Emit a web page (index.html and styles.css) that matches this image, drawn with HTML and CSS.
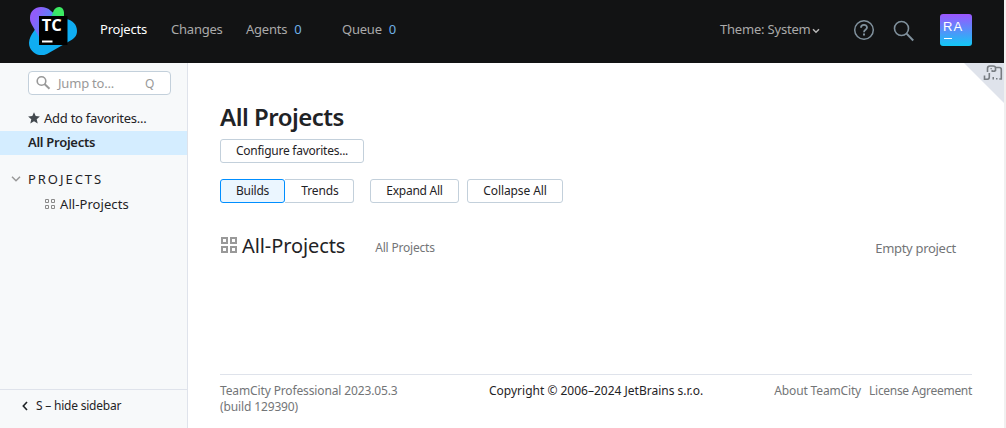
FILE: index.html
```
<!DOCTYPE html>
<html lang="en">
<head>
<meta charset="utf-8">
<title>All Projects — TeamCity</title>
<link rel="stylesheet" href="styles.css">
</head>
<body>
<div class="app">
  <header class="header">
    <svg class="logo" width="50" height="50" viewBox="0 0 50 50">
      <defs>
        <linearGradient id="violet" x1="0" y1="0.3" x2="1" y2="0.7"><stop offset="0.1" stop-color="#905cfb"/><stop offset="0.6" stop-color="#4a8df8"/><stop offset="1" stop-color="#18a3f3"/></linearGradient>
        <linearGradient id="green" x1="1" y1="0" x2="0" y2="1"><stop offset="0.5" stop-color="#3bea62"/><stop offset="1" stop-color="#20b8c0"/></linearGradient>
      </defs>
      <path d="M39 14C46 15 50 20 50 26C50 31 47 34 41 37L20 49C12 53 2 47 2 38C2 34 4 30 7 26L14 14z" fill="#0fadf2"/>
      <path d="M3 13C3 6 8 2 14 2C18 2 21 3 24 6L41 21L31 32L12 32L5 20C3.500 17 3 16 3 13z" fill="url(#violet)"/>
      <path d="M23 14L27 5C30 0 37 1 37 8V15z" fill="url(#green)"/>
      <path d="M12 11h28.500v29H12z" fill="#000"/>
      <path d="M15 35.500h10.500v2H15z" fill="#fff"/>
      <text class="logo-text" x="14.800" y="26" textLength="20" lengthAdjust="spacingAndGlyphs">TC</text>
    </svg>
    <nav class="nav">
      <a class="nav-item nav-active">Projects</a>
      <a class="nav-item nav-changes">Changes</a>
      <a class="nav-item nav-agents">Agents<span class="count">0</span></a>
      <a class="nav-item nav-queue">Queue<span class="count">0</span></a>
    </nav>
    <div class="tools">
      <span class="theme">Theme: System</span>
      <svg class="theme-arrow" width="8" height="6" viewBox="0 0 8 6"><path d="M1 1.200l3 3 3-3" fill="none" stroke="#b8b8b8" stroke-width="1.500"/></svg>
      <svg class="help" width="22" height="22" viewBox="0 0 22 22" fill="none" stroke="#80919d" stroke-width="1.500"><circle cx="11" cy="11" r="9.300"/><path d="M8 8.700C8 5 14 5 14 8.500C14 11 11 10.700 11 13.200" stroke-width="1.800"/><path d="M11 14.500v2" stroke-width="2"/></svg>
      <svg class="find" width="22" height="22" viewBox="0 0 22 22" fill="none" stroke="#80919d" stroke-width="1.600"><circle cx="8.500" cy="8.500" r="7"/><path d="M13.600 13.600l6.600 6.900" stroke-width="2"/></svg>
      <svg class="avatar" width="32" height="32" viewBox="0 0 32 32">
        <defs><linearGradient id="avatar-fill" x1="0" y1="0" x2="0" y2="1"><stop offset="0" stop-color="#9c55ff"/><stop offset="1" stop-color="#12c8f5"/></linearGradient></defs>
        <rect width="32" height="32" rx="3" fill="url(#avatar-fill)"/>
        <text class="avatar-text" x="3" y="17">RA</text>
        <path d="M4 24h8v1H4z" fill="#fff"/>
      </svg>
    </div>
  </header>
  <div class="body">
    <aside class="sidebar">
      <div class="search">
        <svg width="16" height="16" viewBox="0 0 16 16" fill="none" stroke="#999" stroke-width="1.600"><circle cx="6.500" cy="6" r="4.300"/><path d="M9.500 9l5 4.800" stroke-width="2"/></svg>
        <span class="search-label">Jump to...</span><span class="search-key">Q</span>
      </div>
      <div class="favorites"><svg width="12" height="12" viewBox="0 0 12 12"><path d="M6 .2l1.700 3.900 4.200.4-3.200 2.700 1 4.200L6 9.200l-3.700 2.200 1-4.200L.1 4.500l4.200-.4z" fill="#444a4f"/></svg><span>Add to favorites...</span></div>
      <div class="selected">All Projects</div>
      <div class="group"><svg width="10" height="6" viewBox="0 0 10 6"><path d="M1 .8l4 4 4-4" fill="none" stroke="#999" stroke-width="1.500"/></svg><span>PROJECTS</span></div>
      <div class="child"><svg width="11" height="11" viewBox="0 0 11 11" fill="none" stroke="#8a8a8a"><path d="M.5.500h3v3h-3zM6.500.500h3v3h-3zM.5 6.500h3v3h-3zM6.500 6.500h3v3h-3z"/></svg><span>All-Projects</span></div>
      <div class="hide"><svg width="6" height="10" viewBox="0 0 6 10"><path d="M5 1L1.300 5 5 9" fill="none" stroke="#1f2326" stroke-width="1.600"/></svg><span>S – hide sidebar</span></div>
    </aside>
    <main class="main">
      <svg class="corner" width="40" height="40" viewBox="0 0 40 40">
        <path d="M0 0h40v40z" fill="#dfe3eb"/>
        <path d="M20.500 12.500v3.700h3q1.800 0 1.800-2.200V10M23.500 9V5.500q0-2.500 2.500-2.500h3q2.500 0 2.500 2v2.500q-2 1.500-4 0M31.500 4.500h3.800q2 0 2 2V16h-2" fill="none" stroke="#777c81" stroke-width="1.600"/>
        <path d="M28.500 14H30v2.500h-1.500zM32 15h1.500v1.500H32zM26.500 5h1.300v1.300h-1.300z" fill="#777c81"/>
      </svg>
      <h1 class="title">All Projects</h1>
      <div class="row"><button class="btn configure">Configure favorites...</button></div>
      <div class="row controls">
        <button class="btn builds">Builds</button><button class="btn trends">Trends</button><button class="btn expand">Expand All</button><button class="btn collapse">Collapse All</button>
      </div>
      <div class="project">
        <svg width="16" height="16" viewBox="0 0 16 16" fill="none" stroke="#999" stroke-width="2"><path d="M1 1h5v5H1zM10 1h5v5h-5zM1 10h5v5H1zM10 10h5v5h-5z"/></svg>
        <span class="project-name">All-Projects</span><span class="project-parent">All Projects</span><span class="project-state">Empty project</span>
      </div>
      <footer class="footer">
        <div class="version">TeamCity Professional 2023.05.3<br>(build 129390)</div>
        <div class="copyright">Copyright © 2006–2024 JetBrains s.r.o.</div>
        <div class="links"><a class="about">About TeamCity</a><a class="license">License Agreement</a></div>
      </footer>
    </main>
  </div>
</div>
</body>
</html>
```
FILE: styles.css
```
* { box-sizing: border-box; }
body { margin: 0; background: #f0f0f0; font: 13px/20px "Noto Sans", sans-serif; color: #1f2326; overflow: hidden; }
.app { width: 1004px; height: 428px; display: flex; flex-direction: column; background: #fff; white-space: nowrap; }
.header { height: 63px; flex: none; background: #121314; display: flex; align-items: flex-start; color: #aaa; }
.logo { margin: 5px 0 0 27px; flex: none; }
.logo-text { font: 700 16px "Open Sans", sans-serif; fill: #fff; }
.nav { display: flex; margin: 19px 0 0 23px; letter-spacing: -.22px; }
.nav-active { color: #fff; width: 71px; }
.nav-changes { width: 75px; }
.nav-agents { width: 96px; }
.count { color: #70b1e6; margin-left: 7px; }
.tools { display: flex; margin-left: auto; padding-right: 32px; }
.theme { margin-top: 19px; width: 92px; letter-spacing: -.2px; }
.theme-arrow { margin-top: 28px; }
.help { margin: 19px 0 0 33px; }
.find { margin: 20px 0 0 18px; }
.avatar { margin: 14px 0 0 25px; }
.avatar-text { font: 13px "Liberation Sans", sans-serif; fill: #fff; letter-spacing: 1px; }
.body { flex: 1; display: flex; min-height: 0; }
.sidebar { width: 188px; background: #f7f9fa; border-right: 1px solid #dfe3eb; display: flex; flex-direction: column; }
.search { margin: 8px 16px 0 28px; height: 24px; flex: none; border: 1px solid #c3d0db; border-radius: 4px; background: #fff; color: #999; display: flex; align-items: center; padding-left: 6px; }
.search-label { margin-left: 7px; width: 87px; letter-spacing: -.2px; }
.search-key { font-size: 12px; margin-top: 2px; }
.favorites { height: 24px; margin-top: 11px; padding-left: 28px; display: flex; align-items: center; gap: 4px; letter-spacing: -.25px; }
.selected { height: 24px; line-height: 23px; background: #d4edff; margin-top: 1px; padding-left: 28px; font-weight: 600; letter-spacing: -.28px; }
.group { height: 24px; margin-top: 12px; padding-left: 11px; display: flex; align-items: center; gap: 7px; letter-spacing: 1.95px; }
.child { height: 24px; margin-top: 1px; padding-left: 45px; display: flex; align-items: center; gap: 4px; letter-spacing: .07px; }
.hide { height: 39px; margin-top: auto; border-top: 1px solid #dfe3eb; padding: 6px 0 0 22px; display: flex; gap: 8px; font-size: 12px; letter-spacing: -.22px; }
.hide svg { margin-top: 5px; }
.main { flex: 1; position: relative; padding: 0 32px; display: flex; flex-direction: column; }
.corner { position: absolute; top: 0; right: 0; }
.title { margin: 38px 0 1px; font-size: 24px; line-height: 32px; font-weight: 600; letter-spacing: -.5px; }
.row { display: flex; margin-top: 5px; }
.controls { margin-top: 16px; }
.btn { height: 24px; padding: 0; border: 1px solid #c3d0db; border-radius: 3px; background: #fff; font: 12px/20px "Noto Sans", sans-serif; color: #1f2326; letter-spacing: -.25px; }
.configure { width: 144px; }
.builds { width: 65px; background: #ebf6ff; border-color: #008eff; }
.trends { width: 69px; border-left: 0; border-radius: 0 3px 3px 0; padding-left: 2px; letter-spacing: -.12px; }
.expand { width: 89px; margin-left: 16px; }
.collapse { width: 96px; margin-left: 8px; letter-spacing: -.1px; }
.project { display: flex; align-items: flex-start; margin-top: 29px; height: 32px; color: #737577; }
.project svg { margin-top: 5px; margin-left: 1px; }
.project-name { font-size: 20px; line-height: 28px; color: #1f2326; margin-left: 5px; letter-spacing: -.1px; }
.project-parent { font-size: 12px; margin: 6px 0 0 30px; letter-spacing: -.2px; }
.project-state { margin: 6px 16px 0 auto; letter-spacing: -.3px; }
.footer { margin-top: auto; border-top: 1px solid #dfe3eb; height: 54px; padding-top: 8px; font-size: 12px; line-height: 16px; display: flex; color: #737577; }
.version { width: 269px; letter-spacing: -.13px; }
.copyright { color: #1f2326; }
.links { margin-left: auto; display: flex; gap: 8px; }
.about { letter-spacing: -.15px; }
.license { letter-spacing: -.3px; }
```
